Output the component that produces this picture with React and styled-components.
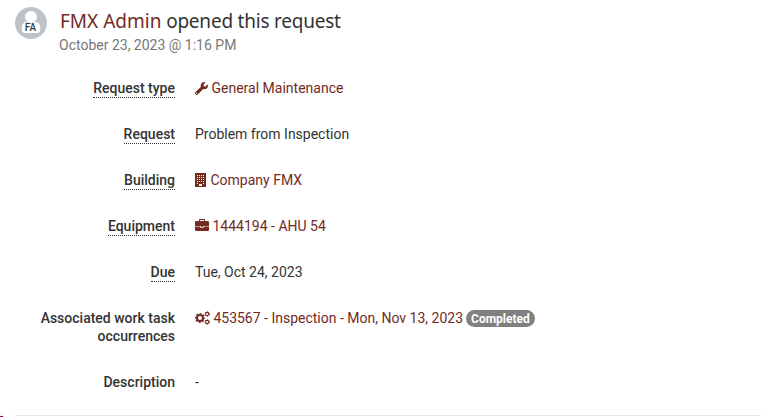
import React from "react";
import styled, { createGlobalStyle } from "styled-components";
import { FaWrench } from "react-icons/fa";

const GlobalStyle = createGlobalStyle`
  * {
    box-sizing: border-box;
  }
  body {
    margin: 0;
    background: #fff;
    color: #333;
    font-family: Roboto, "Liberation Sans", sans-serif;
    font-size: 14px;
    line-height: 18px;
    overflow: hidden;
  }
`;

const BuildingIcon = () => (
    <svg width="11" height="14" viewBox="0 0 11 14" fill="currentColor">
        <path
            fillRule="evenodd"
            d="M0 0h11v14H0zM2 2v1h1V2zM4 2v1h1V2zM6 2v1h1V2zM8 2v1h1V2zM2 4v1h1V4zM4 4v1h1V4zM6 4v1h1V4zM8 4v1h1V4zM2 6v1h1V6zM4 6v1h1V6zM6 6v1h1V6zM8 6v1h1V6zM2 8v1h1V8zM4 8v1h1V8zM6 8v1h1V8zM8 8v1h1V8zM2 10v1h1v-1zM8 10v1h1v-1zM4 11v2h3v-2z"
        />
    </svg>
);

const BriefcaseIcon = () => (
    <svg width="14" height="12" viewBox="0 0 14 12" fill="currentColor">
        <path
            fillRule="evenodd"
            d="M4 2V.8Q4 0 4.800 0h4.400Q10 0 10 .8V2h2.800Q14 2 14 3.200V7H0V3.200Q0 2 1.200 2zM5 2h4V1H5z"
        />
        <path d="M0 7.600h5.200v.6q0 .5.500.5h2.600q.5 0 .5-.5v-.6H14v3.200q0 1.200-1.200 1.200H1.200Q0 12 0 10.800z" />
        <path d="M6.200 7h1.600v.9H6.200z" />
    </svg>
);

const CogsIcon = () => (
    <svg width="15" height="14" viewBox="0 0 15 14" fill="none" stroke="currentColor">
        <circle cx="5" cy="7" r="3" strokeWidth="2" />
        <circle cx="5" cy="7" r="4.400" strokeWidth="1.400" strokeDasharray="1.728" strokeDashoffset=".864" />
        <circle cx="12.200" cy="3" r="1.600" strokeWidth="1.100" />
        <circle cx="12.200" cy="3" r="2.400" strokeWidth=".8" strokeDasharray="1.257" />
        <circle cx="12.200" cy="11" r="1.600" strokeWidth="1.100" />
        <circle cx="12.200" cy="11" r="2.400" strokeWidth=".8" strokeDasharray="1.257" />
    </svg>
);

const Avatar = () => (
    <AvatarCircle>
        <svg width="32" height="32" viewBox="0 0 32 32">
            <circle cx="16" cy="16" r="16" fill="#bdc3c7" />
            <circle cx="16" cy="10" r="6" fill="#fff" />
            <path
                fill="#fff"
                d="M11 14.800c1.300 1.200 3 1.900 5 1.900s3.700-.7 5-1.900c2.800.4 4.200 2.900 4.200 6.200v1.800q0 3.200-3.200 3.200H10q-3.200 0-3.200-3.200V21c0-3.300 1.400-5.800 4.200-6.200z"
            />
        </svg>
        <Initials>FA</Initials>
    </AvatarCircle>
);

function Field({ label, hint, children }) {
    return (
        <Row>
            <Label>{hint ? <Hint>{label}</Hint> : label}</Label>
            <Value>{children}</Value>
        </Row>
    );
}

export default function App() {
    return (
        <Wrapper>
            <GlobalStyle />
            <Header>
                <Avatar />
                <div>
                    <Title>
                        <UserName>FMX Admin</UserName> opened this request
                    </Title>
                    <DateText>October 23, 2023 @ 1:16 PM</DateText>
                </div>
            </Header>

            <Fields>
                <Field label="Request type" hint>
                    <ValueLink>
                        <Icon $width={13} $gap={3.5}><FaWrench size={13} /></Icon>
                        General Maintenance
                    </ValueLink>
                </Field>
                <Field label="Request" hint>Problem from Inspection</Field>
                <Field label="Building" hint>
                    <ValueLink>
                        <Icon $width={11} $gap={4.5}><BuildingIcon /></Icon>
                        Company FMX
                    </ValueLink>
                </Field>
                <Field label="Equipment" hint>
                    <ValueLink>
                        <Icon $width={14} $gap={3.5} $raise={1}><BriefcaseIcon /></Icon>
                        1444194 - AHU 54
                    </ValueLink>
                </Field>
                <Field label="Due" hint>Tue, Oct 24, 2023</Field>
                <Field label="Associated work task occurrences">
                    <ValueLink>
                        <Icon $width={15} $gap={3.4}><CogsIcon /></Icon>
                        453567 - Inspection - Mon, Nov 13, 2023
                    </ValueLink>
                    <Badge>Completed</Badge>
                </Field>
                <Field label="Description">-</Field>
            </Fields>
            <Divider />
            <CornerMark />
        </Wrapper>
    );
}

const Wrapper = styled.div`
  position: relative;
  height: 417px;
  padding: 7px 0 0 15px;
  overflow: hidden;
`;

const Header = styled.div`
  display: flex;
  gap: 12px;
  height: 72px;
`;

const AvatarCircle = styled.div`
  position: relative;
  width: 32px;
  height: 32px;
  svg {
    display: block;
  }
`;

const Initials = styled.span`
  position: absolute;
  left: 0;
  top: 15px;
  width: 31px;
  text-align: center;
  font-size: 10px;
  line-height: 12px;
  font-weight: 500;
  color: #2c3e50;
`;

const Title = styled.h1`
  margin: 0;
  padding-left: 1px;
  font-family: "Noto Sans", sans-serif;
  font-size: 19px;
  line-height: 29px;
  font-weight: 400;
  letter-spacing: -0.22px;
  color: #333;
  white-space: nowrap;
`;

const UserName = styled.a`
  color: #732a1f;
  letter-spacing: 0;
`;

const DateText = styled.div`
  color: #777;
`;

const Fields = styled.div`
  display: flex;
  flex-direction: column;
  gap: 28px;
`;

const Row = styled.div`
  display: grid;
  grid-template-columns: 160px 1fr;
  column-gap: 20px;
`;

const Label = styled.div`
  text-align: right;
  font-weight: 500;
`;

const Hint = styled.span`
  padding-bottom: 1px;
  border-bottom: 1px dotted #333;
`;

const Value = styled.div`
  display: flex;
  align-items: flex-start;
  height: 18px;
  white-space: nowrap;
`;

const ValueLink = styled.a`
  display: flex;
  align-items: center;
  color: #732a1f;
`;

const Icon = styled.span`
  display: flex;
  width: ${(props) => props.$width}px;
  margin-right: ${(props) => props.$gap}px;
  padding-bottom: ${(props) => (props.$raise || 0) * 2}px;
  svg {
    flex: none;
  }
`;

const Badge = styled.span`
  margin: 1px 0 0 3px;
  padding: 1px 5px 0;
  border-radius: 9px;
  background: #808080;
  color: #fff;
  font-size: 12px;
  line-height: 16px;
  font-weight: 700;
`;

const Divider = styled.div`
  margin-top: 24px;
  height: 1px;
  background: #e9e9e9;
`;

/* sliver of the next item peeking in at the lower left */
const CornerMark = styled.div`
  position: absolute;
  left: 0;
  bottom: 0;
  width: 3px;
  height: 3px;
  border-top: 1px solid #e9e9e9;
  background: linear-gradient(90deg, #e00 33%, #080 33% 66%, #00c 66%) 0 100% / 3px 1px no-repeat;
`;
